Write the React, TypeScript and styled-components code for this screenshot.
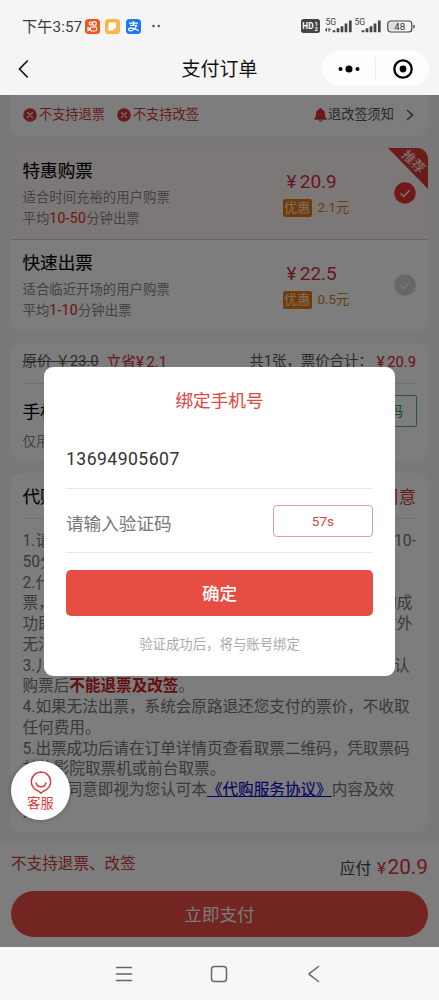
import React from "react";
import styled, { createGlobalStyle, css } from "styled-components";

const GlobalStyle = createGlobalStyle`
  * { box-sizing: border-box; }
  body {
    margin: 0;
    font-family: Roboto, "Noto Sans CJK SC", sans-serif;
    color: #333;
    background: #f5f5f5;
  }
`;

const medium = css`
  font-weight: 400;
  -webkit-text-stroke: 0.12px currentColor;
`;

const Screen = styled.div`
  width: 439px;
  height: 1000px;
  display: flex;
  flex-direction: column;
  overflow: hidden;
`;

const StatusBar = styled.div`
  height: 42px;
  flex: none;
  padding: 11px 24px 0 22px;
  display: flex;
  justify-content: space-between;
  align-items: flex-start;
  background: #f5f5f5;
`;

const StatusGroup = styled.div`
  display: flex;
  align-items: center;
  height: 30px;
`;

const Clock = styled.span`
  width: 61px;
  margin-right: 2px;
  padding-bottom: 2px;
  font-size: 15.2px;
  letter-spacing: 0.1px;
  white-space: nowrap;
  color: #3c3c3c;
`;

const AppBadge = styled.svg`
  width: 15px;
  height: 15px;
  margin-right: 5.3px;
`;

const NavBar = styled.div`
  height: 53px;
  flex: none;
  display: grid;
  grid-template-columns: 120px 1fr 120px;
  align-items: center;
  background: #f5f5f5;
`;

const BackIcon = styled.svg`
  width: 12px;
  height: 20px;
  margin-left: 18px;
`;

const NavTitle = styled.h1`
  margin: 0;
  padding-top: 2px;
  text-align: center;
  font-size: 19px;
  font-weight: 400;
  line-height: 28px;
  color: #111;
`;

const Capsule = styled.div`
  width: 107px;
  height: 35px;
  margin-left: 3px;
  border-radius: 18px;
  background: #fdfdfd;
  display: flex;
  align-items: center;
`;

const CapsuleHalf = styled.div`
  flex: 1;
  height: 24px;
  display: flex;
  align-items: center;
  justify-content: center;
  & + & { border-left: 1px solid #eee; }
`;

const Page = styled.main`
  position: relative;
  height: 852px;
  flex: none;
  display: flex;
  flex-direction: column;
  background: #f0f0f0;
`;

const Card = styled.section<{ $height: number; $flushTop?: boolean }>`
  flex: none;
  height: ${(p) => p.$height}px;
  margin: ${(p) => (p.$flushTop ? "0" : "12px")} 11px 0;
  border-radius: ${(p) => (p.$flushTop ? "0 0 11px 11px" : "11px")};
  background: #fafafa;
  overflow: hidden;
`;

const PolicyRow = styled.div`
  display: flex;
  align-items: center;
  height: 40px;
  padding: 0 14px 0 12px;
  font-size: 13.2px;
`;

const PolicyItem = styled.span<{ $dark?: boolean }>`
  display: flex;
  align-items: center;
  gap: ${(p) => (p.$dark ? 1 : 2)}px;
  margin-right: 12px;
  margin-left: ${(p) => (p.$dark ? "auto" : "0")};
  color: ${(p) => (p.$dark ? "#555" : "#d0383a")};
  line-height: 20px;
`;

const Option = styled.div<{ $active?: boolean }>`
  position: relative;
  height: ${(p) => (p.$active ? 92 : 91)}px;
  padding: 10px 12px 0 11.5px;
  display: grid;
  grid-template-columns: 260px 1fr 22px;
  background: ${(p) => (p.$active ? "#fbf0f0" : "#fafafa")};
  border-bottom: ${(p) => (p.$active ? "1px solid #e0c4c4" : "none")};
`;

const OptionName = styled.h2`
  margin: 0 0 4px;
  padding-top: 1px;
  font-size: 17.6px;
  line-height: 25px;
  ${medium}
  color: #000;
`;

const OptionNote = styled.p`
  margin: 0;
  font-size: 13.4px;
  line-height: 20px;
  color: #858585;
  b { ${medium} color: #e0302c; font-size: 14px; letter-spacing: 0.3px; }
`;

const PriceColumn = styled.div`
  padding-top: 11px;
`;

const Price = styled.div`
  padding-left: 4px;
  font-size: 19px;
  line-height: 25px;
  word-spacing: -1.5px;
  color: #d0303a;
`;

const Discount = styled.div`
  display: flex;
  align-items: center;
  gap: 5.5px;
  margin-top: 5px;
  font-size: 13.4px;
  line-height: 18px;
  color: #d0782c;
`;

const DiscountTag = styled.span`
  width: 29.5px;
  height: 18px;
  line-height: 17px;
  border-radius: 2px;
  text-align: center;
  ${medium}
  font-size: 13px;
  color: #f4dcc4;
  background: #e4760c;
`;

const Check = styled.svg`
  width: 22px;
  height: 22px;
  margin-top: 24px;
`;

const Ribbon = styled.div`
  position: absolute;
  top: 0;
  right: 0;
  width: 40px;
  height: 41px;
  background: #d43836;
  clip-path: polygon(0 0, 100% 0, 100% 100%);
  span {
    position: absolute;
    left: 11.5px;
    top: 4.5px;
    font-size: 13px;
    line-height: 18px;
    ${medium}
    color: #ffe2e2;
    transform: rotate(45deg);
    white-space: nowrap;
  }
`;

const SummaryRow = styled.div`
  display: flex;
  align-items: center;
  height: 41px;
  margin: 0 12px 0 11.5px;
  padding-bottom: 2px;
  border-bottom: 1px solid #e0e0e0;
  font-size: 14.4px;
  line-height: 20px;
  white-space: nowrap;
`;

const Original = styled.span`
  width: 77px;
  letter-spacing: 0.2px;
  text-decoration: line-through;
  color: #555;
`;

const Accent = styled.span<{ $push?: boolean }>`
  margin-left: ${(p) => (p.$push ? "4px" : "7px")};
  ${medium}
  font-size: 14.8px;
  word-spacing: -1px;
  color: #d0343a;
`;

const Total = styled.span`
  margin-left: auto;
  color: #555;
`;

const PhoneRow = styled.div`
  display: flex;
  align-items: center;
  justify-content: space-between;
  margin: 10.5px 11px 0 11.5px;
  height: 32px;
  font-size: 17.6px;
  ${medium}
  color: #000;
`;

const VerifyButton = styled.button`
  width: 100px;
  height: 32px;
  padding: 0 13px 1px;
  border: 1px solid #5cb080;
  border-radius: 2px;
  text-align: right;
  background: #fafafa;
  color: #1fa050;
  font: 400 13.4px Roboto, "Noto Sans CJK SC", sans-serif;
`;

const PhoneHint = styled.p`
  margin: 5px 0 0 11.5px;
  font-size: 13.4px;
  line-height: 20px;
  color: #858585;
`;

const TermsHead = styled.div`
  display: flex;
  justify-content: space-between;
  align-items: center;
  height: 46px;
  margin: 0 12px 12px 11.5px;
  border-bottom: 1px solid #e0e0e0;
  font-size: 17.6px;
  ${medium}
  color: #000;
  em { font-style: normal; color: #cc3c3c; -webkit-text-stroke: 0; }
`;

const Terms = styled.div`
  margin-left: 11.5px;
  font-size: 15.6px;
  color: #747474;
  p {
    margin: 0;
    height: 20.75px;
    line-height: 20.75px;
    white-space: nowrap;
  }
  b { color: #c81c24; font-weight: 700; }
  a { color: #0000c8; ${medium} text-decoration: underline; }
`;

const PayBar = styled.footer`
  margin-top: auto;
  height: 104px;
  padding: 8px 11px 0;
  background: #fafafa;
`;

const PayInfo = styled.div`
  display: flex;
  justify-content: space-between;
  height: 40px;
  padding-top: 1px;
  font-size: 15.6px;
  line-height: 24px;
  color: #c43a3a;
`;

const PayAmount = styled.div`
  display: flex;
  align-items: baseline;
  padding-top: 3px;
  color: #444;
  small { margin: 0 1.5px 0 6px; font-size: 17px; color: #d0343a; }
  strong { font-size: 20.8px; font-weight: 400; color: #d0343a; }
`;

const PayButton = styled.button`
  display: block;
  width: 100%;
  height: 46px;
  padding: 0 0 2px;
  border: 0;
  border-radius: 23px;
  background: #e44a42;
  color: #f4f4f4;
  font: 400 17.6px Roboto, "Noto Sans CJK SC", sans-serif;
`;

const Mask = styled.div`
  position: absolute;
  inset: 0;
  display: flex;
  justify-content: center;
  align-items: flex-start;
  padding-top: 272px;
  background: rgba(0, 0, 0, 0.5);
`;

const Dialog = styled.div`
  width: 351px;
  height: 309px;
  padding: 21px 22px 0;
  border-radius: 9px;
  background: #fff;
`;

const DialogTitle = styled.h3`
  margin: 0;
  text-align: center;
  font-size: 17.6px;
  line-height: 26px;
  ${medium}
  color: #dc4a44;
`;

const Field = styled.div<{ $height: number }>`
  display: flex;
  align-items: center;
  justify-content: space-between;
  height: ${(p) => p.$height}px;
  border-bottom: 1px solid #e8e8e8;
  font-size: 17.6px;
`;

const PhoneNumber = styled.span`
  padding-top: 15px;
  letter-spacing: 0.45px;
  color: #333;
`;

const Placeholder = styled.span`
  padding-top: 4px;
  color: #777;
`;

const Countdown = styled.button`
  width: 100px;
  height: 32px;
  border: 1px solid #dfa09c;
  border-radius: 4px;
  background: #fff;
  color: #cf4640;
  font: 400 13.6px Roboto, sans-serif;
`;

const Confirm = styled.button`
  display: block;
  width: 100%;
  height: 46px;
  margin-top: 17px;
  padding: 0 0 2px;
  border: 0;
  border-radius: 5px;
  background: #e64d43;
  color: #fff;
  font: 500 17.6px Roboto, "Noto Sans CJK SC", sans-serif;
`;

const DialogHint = styled.p`
  margin: 19px 0 0;
  text-align: center;
  font-size: 13.4px;
  line-height: 20px;
  color: #aaa;
`;

const Service = styled.button`
  position: absolute;
  left: 11px;
  top: 666px;
  width: 59px;
  height: 59px;
  padding: 10px 0 0;
  border: 0;
  border-radius: 50%;
  display: flex;
  flex-direction: column;
  align-items: center;
  background: #fff;
  box-shadow: 0 0 5px rgba(0, 0, 0, 0.25);
  color: #d63a3a;
  font: 400 13.2px/18px "Noto Sans CJK SC", sans-serif;
`;

const SystemNav = styled.nav`
  height: 53px;
  flex: none;
  display: flex;
  justify-content: center;
  align-items: center;
  gap: 77px;
  padding-right: 1px;
  background: #f7f7f7;
`;

const DenyIcon = () => (
  <svg width="14" height="14" viewBox="0 0 14 14">
    <circle cx="7" cy="7" r="6.8" fill="#d0383a" />
    <path d="M4.5 4.5l5 5m0-5l-5 5" stroke="#ffdada" strokeWidth="1.2" strokeLinecap="round" />
  </svg>
);

const Signal = ({ arrows }: { arrows?: boolean }) => (
  <svg width="28" height="16" viewBox="0 0 28 16">
    <text x="0.5" y="6.7" fontSize="8.6" fontFamily="Roboto" fill="#444">5G</text>
    {arrows && <path d="M1.5 10v3.5M0 12h1.5M4 13.8V10M5.7 11.5H4" stroke="#444" strokeWidth="1.1" />}
    <path
      d="M9 14.3v-2M13 14.3v-4M17 14.3V8.3M21 14.3V5.5M25.3 14.3V2.5"
      stroke="#444"
      strokeWidth="2.7"
    />
  </svg>
);

const CheckMark = ({ active }: { active?: boolean }) => (
  <Check viewBox="0 0 22 22">
    <circle cx="11" cy="11" r="10.7" fill={active ? "#e0322f" : "#cecece"} />
    <path d="M6.5 11.3l3.2 3.2 6-6.3" fill="none" stroke={active ? "#ffe0e0" : "#f0f0f0"} strokeWidth="1.5" />
  </Check>
);

interface TicketOptionProps {
  name: string;
  note: string;
  minutes: string;
  price: string;
  saved: string;
  active?: boolean;
}

const TicketOption = ({ name, note, minutes, price, saved, active }: TicketOptionProps) => (
  <Option $active={active}>
    <div>
      <OptionName>{name}</OptionName>
      <OptionNote>{note}</OptionNote>
      <OptionNote>平均<b>{minutes}</b>分钟出票</OptionNote>
    </div>
    <PriceColumn>
      <Price>¥ {price}</Price>
      <Discount><DiscountTag>优惠</DiscountTag>{saved}元</Discount>
    </PriceColumn>
    <CheckMark active={active} />
    {active && <Ribbon><span>推荐</span></Ribbon>}
  </Option>
);

export default function App() {
  return (
    <Screen>
      <GlobalStyle />
      <StatusBar>
        <StatusGroup>
          <Clock>下午3:57</Clock>
          <AppBadge viewBox="0 0 15 15">
            <rect width="15" height="15" rx="3.5" fill="#f2541f" />
            <g fill="none" stroke="#fff" strokeWidth="1.2">
              <circle cx="5.7" cy="4.6" r="1.5" />
              <circle cx="9.4" cy="4.6" r="1.9" />
              <rect x="5.4" y="8" width="6.2" height="4" rx="1.2" />
              <path d="M5.4 10L3 8.6v3z" />
            </g>
          </AppBadge>
          <AppBadge viewBox="0 0 15 15">
            <rect width="15" height="15" rx="3.5" fill="#f8b548" />
            <path d="M4.3 3.4h6.9v5.2l-3 3H3.4V4.3z" fill="#fff" />
            <path d="M11.3 8.6H8.2v3z" fill="#fcdca4" />
          </AppBadge>
          <AppBadge viewBox="0 0 15 15">
            <rect width="15" height="15" rx="3.5" fill="#1b78f2" />
            <path
              d="M3 4.2h9M7.5 2v4.2M4 6.3h6.6C9.6 9.6 6.8 12 4 11.8c-2-.3-1.8-2.8.6-2.9 2.6 0 5.3 1.4 8 2.7"
              fill="none"
              stroke="#fff"
              strokeWidth="1.3"
            />
          </AppBadge>
          <svg width="18" height="4" viewBox="0 0 18 4">
            <circle cx="7.5" cy="2" r="1.3" fill="#555" />
            <circle cx="12.8" cy="2" r="1.3" fill="#555" />
          </svg>
        </StatusGroup>
        <StatusGroup>
          <svg width="19" height="14" viewBox="0 0 19 14">
            <rect width="19" height="14" rx="2.5" fill="#444" />
            <text x="1.3" y="10" fontSize="8.3" fontWeight="700" fontFamily="Roboto" fill="#fff">HD</text>
            <text x="13.5" y="6.5" fontSize="6" fontWeight="700" fontFamily="Roboto" fill="#fff">1</text>
            <text x="13.5" y="12.3" fontSize="6" fontWeight="700" fontFamily="Roboto" fill="#fff">2</text>
          </svg>
          <svg width="5" height="14" />
          <Signal arrows />
          <svg width="1" height="14" />
          <Signal />
          <svg width="5" height="14" />
          <svg width="28" height="13" viewBox="0 0 28 13">
            <rect x="0.8" y="1" width="24" height="11" rx="3" fill="#f5f5f5" stroke="#444" strokeWidth="1.2" />
            <path d="M3.5 2.5H12v8H3.5a1.2 1.2 0 0 1-1.2-1.2V3.7a1.2 1.2 0 0 1 1.2-1.2z" fill="#ddd" />
            <path d="M27 5v3.2" stroke="#444" strokeWidth="1.4" />
            <text x="12.8" y="10" textAnchor="middle" fontSize="9.8" fontFamily="Roboto" fill="#333">48</text>
          </svg>
        </StatusGroup>
      </StatusBar>

      <NavBar>
        <BackIcon viewBox="0 0 12 20">
          <path d="M9.7 1.5L1.5 10l8.2 8.5" fill="none" stroke="#111" strokeWidth="1.7" />
        </BackIcon>
        <NavTitle>支付订单</NavTitle>
        <Capsule>
          <CapsuleHalf>
            <svg width="22" height="8" viewBox="0 0 22 8">
              <circle cx="2.5" cy="4" r="2" />
              <circle cx="11" cy="4" r="3.5" />
              <circle cx="19.5" cy="4" r="2" />
            </svg>
          </CapsuleHalf>
          <CapsuleHalf>
            <svg width="20" height="20" viewBox="0 0 20 20">
              <circle cx="10" cy="10" r="8.7" fill="none" stroke="#000" strokeWidth="2.3" />
              <circle cx="10" cy="10" r="3.4" />
            </svg>
          </CapsuleHalf>
        </Capsule>
      </NavBar>

      <Page>
        <Card $height={41} $flushTop>
          <PolicyRow>
            <PolicyItem><DenyIcon />不支持退票</PolicyItem>
            <PolicyItem><DenyIcon />不支持改签</PolicyItem>
            <PolicyItem $dark>
              <svg width="13" height="14" viewBox="0 0 13 14">
                <path
                  d="M6.5 0c.8 0 1.2.5 1.2 1.2 2.3.7 3.3 2.5 3.3 4.8 0 2.5.4 3.3 1.8 4.5v1.2H.2v-1.2C1.600 9.300 2 8.500 2 6c0-2.300 1-4.100 3.300-4.800C5.300.5 5.700 0 6.500 0zM4.500 12.200h4c-.3 1.800-3.700 1.800-4 0z"
                  fill="#d9302c"
                />
              </svg>
              退改签须知
            </PolicyItem>
            <svg width="8" height="12" viewBox="0 0 8 12">
              <path d="M1 1l5.5 5L1 11" fill="none" stroke="#555" strokeWidth="1.5" />
            </svg>
          </PolicyRow>
        </Card>

        <Card $height={183}>
          <TicketOption name="特惠购票" note="适合时间充裕的用户购票" minutes="10-50" price="20.9" saved="2.1" active />
          <TicketOption name="快速出票" note="适合临近开场的用户购票" minutes="1-10" price="22.5" saved="0.5" />
        </Card>

        <Card $height={118}>
          <SummaryRow>
            <Original>原价 ￥23.0</Original>
            <Accent>立省¥ 2.1</Accent>
            <Total>共1张，票价合计：</Total>
            <Accent $push>¥ 20.9</Accent>
          </SummaryRow>
          <PhoneRow>手机号<VerifyButton>获取验证码</VerifyButton></PhoneRow>
          <PhoneHint>仅用于接收取票短信</PhoneHint>
        </Card>

        <Card $height={359}>
          <TermsHead>代购服务说明<em>阅读并同意</em></TermsHead>
          <Terms>
            <p>1.请仔细核对影片、场次、座位等信息，出票时间约为10-</p>
            <p>50分钟，请您耐心等待。</p>
            <p>2.代购服务由第三方平台提供，下单后将尽快为您出</p>
            <p>票，请您在支付之后耐心等待，以收到短信通知出票的成</p>
            <p>功即为准。因影院的系统、网络或者座位变化等各类意外</p>
            <p>无法出票的，将为您全额退款。</p>
            <p>3.儿童票等特殊票种请提前咨询影院后再购买，请您确认</p>
            <p>购票后<b>不能退票及改签</b>。</p>
            <p>4.如果无法出票，系统会原路退还您支付的票价，不收取</p>
            <p>任何费用。</p>
            <p>5.出票成功后请在订单详情页查看取票二维码，凭取票码</p>
            <p>前往影院取票机或前台取票。</p>
            <p>6.点击同意即视为您认可本<a>《代购服务协议》</a>内容及效</p>
            <p>力。</p>
          </Terms>
        </Card>

        <PayBar>
          <PayInfo>
            <span>不支持退票、改签</span>
            <PayAmount>应付 <small>¥</small><strong>20.9</strong></PayAmount>
          </PayInfo>
          <PayButton>立即支付</PayButton>
        </PayBar>

        <Mask>
          <Dialog>
            <DialogTitle>绑定手机号</DialogTitle>
            <Field $height={75}><PhoneNumber>13694905607</PhoneNumber></Field>
            <Field $height={64}>
              <Placeholder>请输入验证码</Placeholder>
              <Countdown>57s</Countdown>
            </Field>
            <Confirm>确定</Confirm>
            <DialogHint>验证成功后，将与账号绑定</DialogHint>
          </Dialog>
        </Mask>

        <Service>
          <svg width="22" height="23" viewBox="0 0 22 23">
            <path
              d="M11 1a9.7 9.7 0 0 1 2.7 19L11 22.2 8.3 20A9.7 9.7 0 0 1 11 1zM6 12c1.5 5 8.5 5 10 0"
              fill="none"
              stroke="#d63a3a"
              strokeWidth="1.4"
              strokeLinecap="round"
            />
          </svg>
          客服
        </Service>
      </Page>

      <SystemNav>
        <svg width="18" height="18" viewBox="0 0 18 18">
          <path d="M1.5 2.5h15M1.5 9h15M1.5 15.5h15" stroke="#666" strokeWidth="1.5" strokeLinecap="round" />
        </svg>
        <svg width="18" height="18" viewBox="0 0 18 18">
          <rect x="1.5" y="1.5" width="15" height="15" rx="3" fill="none" stroke="#666" strokeWidth="1.5" />
        </svg>
        <svg width="18" height="18" viewBox="0 0 18 18">
          <path d="M13.5 1.5L4.6 8.3q-.8.7 0 1.4l8.9 6.8" fill="none" stroke="#666" strokeWidth="1.5" strokeLinecap="round" />
        </svg>
      </SystemNav>
    </Screen>
  );
}
